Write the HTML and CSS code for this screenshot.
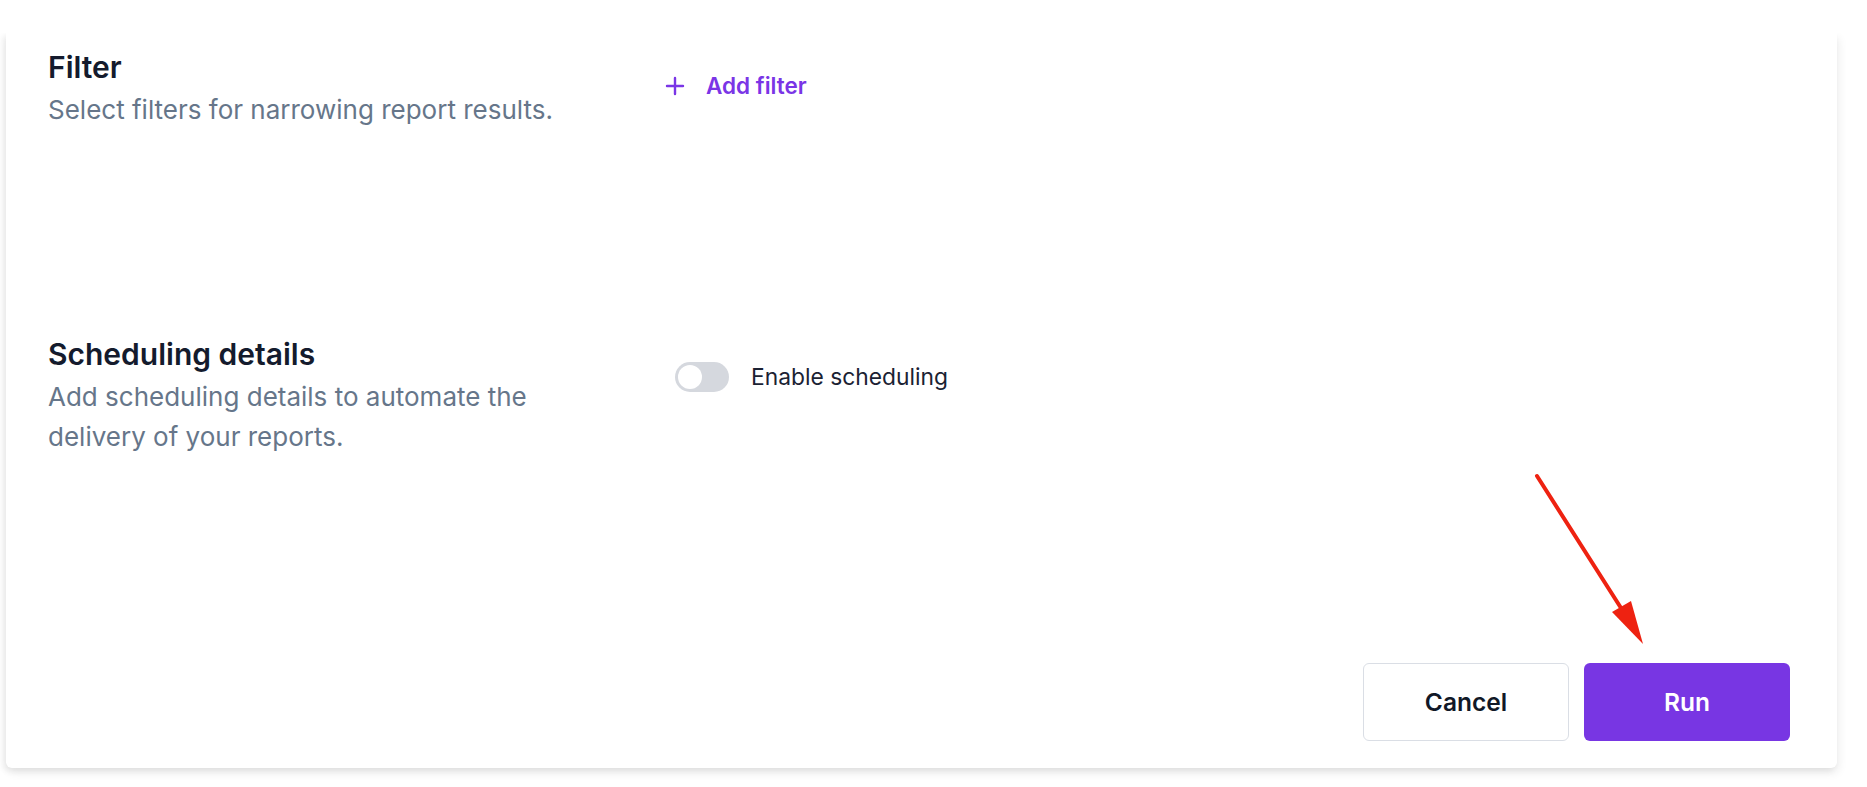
FILE: index.html
```html
<!DOCTYPE html>
<html lang="en">
<head>
<meta charset="utf-8">
<title>Report settings</title>
<link rel="stylesheet" href="styles.css">
</head>
<body>
<div class="page">
  <div class="card">
    <section class="row row-filter">
      <div class="info">
        <h2 class="title">Filter</h2>
        <p class="desc">Select filters for narrowing report results.</p>
      </div>
      <div class="control control-filter">
        <button class="link-btn" type="button">
          <svg class="plus" viewBox="0 0 20 20" width="20" height="20" aria-hidden="true"><path d="M10 2v16M2 10h16" stroke="currentColor" stroke-width="2.4" stroke-linecap="round" fill="none"/></svg>
          <span>Add filter</span>
        </button>
      </div>
    </section>
    <section class="row row-sched">
      <div class="info">
        <h2 class="title">Scheduling details</h2>
        <p class="desc">Add scheduling details to automate the<br>delivery of your reports.</p>
      </div>
      <div class="control control-sched">
        <span class="toggle"><span class="knob"></span></span>
        <span class="toggle-label">Enable scheduling</span>
      </div>
    </section>
    <div class="actions">
      <button class="btn btn-cancel" type="button">Cancel</button>
      <button class="btn btn-run" type="button">Run</button>
    </div>
  </div>
  <svg class="arrow" width="1867" height="787" viewBox="0 0 1867 787" aria-hidden="true">
    <line x1="1537" y1="476" x2="1628" y2="619" stroke="#ee2211" stroke-width="4" stroke-linecap="round"/>
    <polygon points="1643,644 1612,612 1631,601" fill="#ee2211"/>
  </svg>
</div>
</body>
</html>
```
FILE: styles.css
```css
* { box-sizing: border-box; }
html, body { margin: 0; padding: 0; background: #ffffff; }
body {
  font-family: Inter, "Noto Sans", "Liberation Sans", sans-serif;
  color: #111827;
  width: 1867px;
  height: 787px;
  overflow: hidden;
}
.page {
  position: relative;
  width: 1867px;
  height: 787px;
  padding: 33px 30px 19px 6px;
}
.card {
  height: 735px;
  background: #ffffff;
  border-radius: 0 0 6px 6px;
  box-shadow: -3px 3px 6px rgba(0, 0, 0, 0.07), 2px 5px 10px rgba(0, 0, 0, 0.07);
  clip-path: inset(0 -30px -30px -30px);
  display: flex;
  flex-direction: column;
  padding: 16px 47px 27px 42px;
}
.row {
  display: flex;
}
.row-sched {
  margin-top: 206px;
}
.info {
  width: 617px;
  flex: none;
}
.title {
  margin: 0;
  font-size: 30px;
  line-height: 36px;
  font-weight: 600;
  color: #141b2d;
}
.desc {
  margin: 5px 0 0;
  font-size: 26px;
  line-height: 40px;
  color: #66768a;
}
.control {
  display: flex;
  align-items: center;
}
.control-filter {
  padding-top: 22px;
  align-self: flex-start;
}
.link-btn {
  display: flex;
  align-items: center;
  gap: 21px;
  border: 0;
  background: none;
  padding: 0;
  font-family: inherit;
  font-size: 22.5px;
  line-height: 30px;
  font-weight: 600;
  color: #7a35e6;
  cursor: pointer;
}
.plus { display: block; }
.control-sched {
  align-self: flex-start;
  padding-top: 26px;
  gap: 22px;
  padding-left: 10px;
}
.toggle {
  width: 54px;
  height: 30px;
  border-radius: 15px;
  background: #d5d8de;
  padding: 3px;
  display: flex;
  align-items: center;
}
.knob {
  width: 24px;
  height: 24px;
  border-radius: 50%;
  background: #ffffff;
}
.toggle-label {
  font-size: 22.8px;
  line-height: 30px;
  color: #1b2233;
}
.actions {
  margin-top: auto;
  display: flex;
  justify-content: flex-end;
  gap: 15px;
}
.btn {
  width: 206px;
  height: 78px;
  border-radius: 6px;
  font-family: inherit;
  font-size: 24.5px;
  font-weight: 600;
  cursor: pointer;
}
.btn-cancel {
  background: #ffffff;
  border: 1.5px solid #dadee5;
  color: #111827;
}
.btn-run {
  background: #7836e3;
  border: 0;
  color: #ffffff;
}
.arrow {
  position: absolute;
  left: 0;
  top: 0;
  pointer-events: none;
}
```
